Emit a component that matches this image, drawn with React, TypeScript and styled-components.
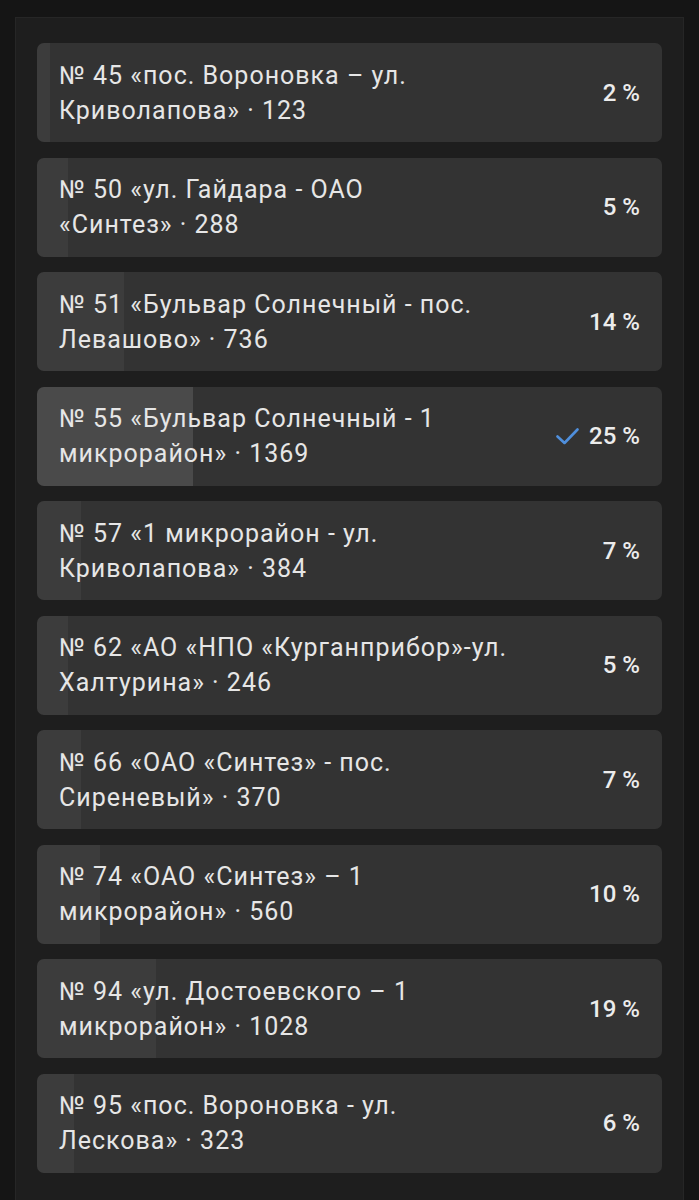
import styled, { createGlobalStyle } from 'styled-components';

type PollOption = {
  title: string;
  votes: number;
  percent: number;
  chosen?: boolean;
};

const options: PollOption[] = [
  { title: '№ 45 «пос. Вороновка – ул. Криволапова»', votes: 123, percent: 2 },
  { title: '№ 50 «ул. Гайдара - ОАО «Синтез»', votes: 288, percent: 5 },
  { title: '№ 51 «Бульвар Солнечный - пос. Левашово»', votes: 736, percent: 14 },
  { title: '№ 55 «Бульвар Солнечный - 1 микрорайон»', votes: 1369, percent: 25, chosen: true },
  { title: '№ 57 «1 микрорайон - ул. Криволапова»', votes: 384, percent: 7 },
  { title: '№ 62 «АО «НПО «Курганприбор»-ул. Халтурина»', votes: 246, percent: 5 },
  { title: '№ 66 «ОАО «Синтез» - пос. Сиреневый»', votes: 370, percent: 7 },
  { title: '№ 74 «ОАО «Синтез» – 1 микрорайон»', votes: 560, percent: 10 },
  { title: '№ 94 «ул. Достоевского – 1 микрорайон»', votes: 1028, percent: 19 },
  { title: '№ 95 «пос. Вороновка - ул. Лескова»', votes: 323, percent: 6 },
];

const GlobalStyle = createGlobalStyle`
  body {
    margin: 0;
    background-color: #151515;
    font-family: Roboto, 'Noto Sans', sans-serif;
  }
`;

const StyledPanel = styled.div`
  margin: 17px 15px 0 15px;
  padding: 25px 21px 30px 21px;
  background-color: #1e1e1e;
  border: 1px solid #262626;
  border-bottom: none;
  display: flex;
  flex-direction: column;
  gap: 15.5px;
`;

const StyledOption = styled.div<{ $percent: number; $chosen: boolean }>`
  min-height: 99px;
  padding: 0 22px;
  display: flex;
  align-items: center;
  border-radius: 7px;
  background: ${({ $percent, $chosen }) => {
    const fill = $chosen ? '#4a4a4a' : '#3c3c3c';
    return `linear-gradient(to right, ${fill} 0 ${$percent}%, #333333 ${$percent}% 100%)`;
  }};
`;

const StyledTitle = styled.p`
  width: 470px;
  margin: 0;
  font-size: 25px;
  letter-spacing: 1px;
  line-height: 35px;
  color: #e6e6e6;
`;

const StyledResult = styled.div`
  margin-left: auto;
  display: flex;
  align-items: center;
  gap: 10px;
  font-size: 24px;
  font-weight: 500;
  color: #ececec;
  white-space: nowrap;
`;

const CheckIcon = () => (
  <svg width='23' height='17' viewBox='0 0 23 17' fill='none'>
    <polyline
      points='1.5,8.5 8.5,15 21.5,1.5'
      stroke='#4f8fdc'
      strokeWidth='2.6'
      strokeLinecap='round'
      strokeLinejoin='round'
    />
  </svg>
);

const App: React.FC = () => {
  return (
    <>
      <GlobalStyle />
      <StyledPanel>
        {options.map((option) => (
          <StyledOption
            key={option.title}
            $percent={option.percent}
            $chosen={!!option.chosen}
          >
            <StyledTitle>{`${option.title}\u00a0·\u00a0${option.votes}`}</StyledTitle>
            <StyledResult>
              {option.chosen && <CheckIcon />}
              {`${option.percent}\u00a0%`}
            </StyledResult>
          </StyledOption>
        ))}
      </StyledPanel>
    </>
  );
};

export default App;
